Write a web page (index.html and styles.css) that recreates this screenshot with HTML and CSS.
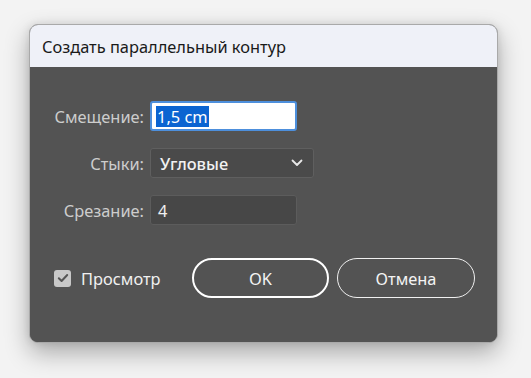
FILE: index.html
```html
<!DOCTYPE html>
<html lang="ru">
<head>
<meta charset="utf-8">
<link rel="stylesheet" href="styles.css">
</head>
<body>
<div class="dialog">
  <div class="titlebar">Создать параллельный контур</div>
  <div class="content">
    <div class="form">
      <label class="lbl">Смещение:</label>
      <div class="field field-active"><span class="sel">1,5 cm</span></div>
      <label class="lbl">Стыки:</label>
      <div class="field field-select">
        <span class="sel-text">Угловые</span>
        <svg class="chev" width="12" height="8" viewBox="0 0 12 8"><path d="M1.5 1.5 L6 6 L10.5 1.5" fill="none" stroke="#e8e8e8" stroke-width="1.8" stroke-linecap="round" stroke-linejoin="round"/></svg>
      </div>
      <label class="lbl">Срезание:</label>
      <div class="field field-dark">4</div>
    </div>
    <div class="footer">
      <div class="check">
        <span class="box"><svg width="12" height="10" viewBox="0 0 12 10"><path d="M1.8 5.2 L4.6 8 L10.2 2" fill="none" stroke="#555" stroke-width="2" stroke-linecap="round" stroke-linejoin="round"/></svg></span>
        <span class="check-label">Просмотр</span>
      </div>
      <div class="btn btn-primary">OK</div>
      <div class="btn btn-secondary">Отмена</div>
    </div>
  </div>
</div>
</body>
</html>
```
FILE: styles.css
```css
html, body {
  margin: 0;
  padding: 0;
}
body {
  background: #f3f3f3;
  width: 531px;
  height: 378px;
  overflow: hidden;
  padding: 24px 0 0 29px;
  box-sizing: border-box;
  font-family: "Noto Sans", "Open Sans", sans-serif;
}
.dialog {
  width: 469px;
  height: 319px;
  box-sizing: border-box;
  border: 1px solid #a9a9a9;
  border-radius: 9px;
  overflow: hidden;
  display: flex;
  flex-direction: column;
  box-shadow: 0 10px 24px rgba(0,0,0,0.30), 0 0 8px rgba(0,0,0,0.10);
  background: #535353;
}
.titlebar {
  height: 42px;
  background: #eff1f8;
  color: #1a1a1a;
  font-size: 16.4px;
  display: flex;
  align-items: center;
  padding-left: 12px;
  flex: none;
}
.content {
  flex: 1;
  background: #535353;
  padding-top: 34px;
}
.form {
  display: grid;
  grid-template-columns: 114px auto;
  column-gap: 6px;
  row-gap: 17px;
  align-items: center;
  justify-items: start;
}
.lbl {
  justify-self: end;
  color: #cdcdcd;
  font-size: 16.4px;
}
.field {
  height: 30px;
  box-sizing: border-box;
  border-radius: 3px;
  font-size: 16.4px;
  display: flex;
  align-items: center;
}
.field-active {
  width: 147px;
  background: #fff;
  border: 2px solid #4d8fdc;
  padding-left: 4px;
}
.sel {
  background: #0b64d1;
  color: #fff;
  line-height: 21px;
  padding: 0 1px 0 1px;
}
.field-select {
  width: 164px;
  background: #4a4a4a;
  border: 1px solid #5f5f5f;
  padding: 0 10px 0 9px;
  justify-content: space-between;
  color: #f2f2f2;
  font-weight: 500;
}
.field-dark {
  width: 147px;
  background: #474747;
  border: 1px solid #5c5c5c;
  padding-left: 7px;
  color: #f0f0f0;
}
.footer {
  display: flex;
  align-items: center;
  margin-top: 33px;
  padding-left: 24px;
}
.check {
  display: flex;
  align-items: center;
  width: 138px;
}
.box {
  width: 17px;
  height: 17px;
  border-radius: 3px;
  background: #c8c8c8;
  display: flex;
  align-items: center;
  justify-content: center;
  margin-right: 10px;
}
.check-label {
  color: #f0f0f0;
  font-size: 16.4px;
}
.btn {
  height: 40px;
  box-sizing: border-box;
  border-radius: 20px;
  display: flex;
  align-items: center;
  justify-content: center;
  color: #f4f4f4;
  font-size: 16.4px;
}
.btn-primary {
  width: 137px;
  border: 2.5px solid #fff;
}
.btn-secondary {
  width: 138px;
  border: 1.5px solid #f0f0f0;
  margin-left: 8px;
}
```
